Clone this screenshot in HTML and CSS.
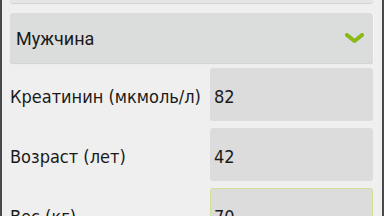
FILE: index.html
```html
<!DOCTYPE html>
<html lang="ru">
<head>
    <meta charset="UTF-8">
    <title>Калькулятор СКФ</title>
    <link rel="stylesheet" href="styles.css">
</head>
<body>
    <div class="frame">
        <div class="top-card"></div>
        <div class="select">
            <span>Мужчина</span>
            <svg class="chevron" width="19" height="10" viewBox="0 0 19 10">
                <path d="M2 2 L9.5 8 L17 2" fill="none" stroke="#8cb91a" stroke-width="4" stroke-linecap="square"/>
            </svg>
        </div>
        <div class="row">
            <label>Креатинин (мкмоль/л)</label>
            <div class="field">82</div>
        </div>
        <div class="row">
            <label>Возраст (лет)</label>
            <div class="field">42</div>
        </div>
        <div class="row">
            <label>Вес (кг)</label>
            <div class="field focus">70</div>
        </div>
    </div>
</body>
</html>
```

FILE: styles.css
```css
body {
    margin: 0;
    background: #efefef;
    font-family: "DejaVu Sans Condensed", "Noto Sans", sans-serif;
    color: #1a1a1a;
    overflow: hidden;
}
.frame {
    height: 216px;
    border-left: 2px solid #4a4a4a;
    border-right: 2px solid #4a4a4a;
    padding: 0 9px 0 8px;
    overflow: hidden;
}
.top-card {
    height: 3px;
    background: #e4e6e5;
    border-radius: 0 0 3px 3px;
    box-shadow: 0 1px 1px #d2d2d2;
}
.select {
    margin-top: 10px;
    height: 50px;
    background: #dbdddc;
    border-radius: 3px;
    box-shadow: 0 1px 1px #d0d0d0, 1px 0 0 #fafafa;
    display: flex;
    align-items: center;
    justify-content: space-between;
    padding: 0 9px 0 6px;
    font-family: Roboto, sans-serif;
    font-size: 18px;
}
.row {
    display: flex;
    align-items: center;
    margin-top: 5px;
    height: 53px;
}
.row + .row {
    margin-top: 7px;
}
.row label {
    width: 200px;
    font-size: 18px;
    padding-top: 3px;
}
.field {
    flex: 1;
    height: 100%;
    box-sizing: border-box;
    background: #dcdcdc;
    border-radius: 3px;
    display: flex;
    align-items: center;
    padding: 3px 0 0 4px;
    font-size: 18px;
}
.focus {
    border: 1px solid #cfe09a;
    padding-left: 3px;
}
```
